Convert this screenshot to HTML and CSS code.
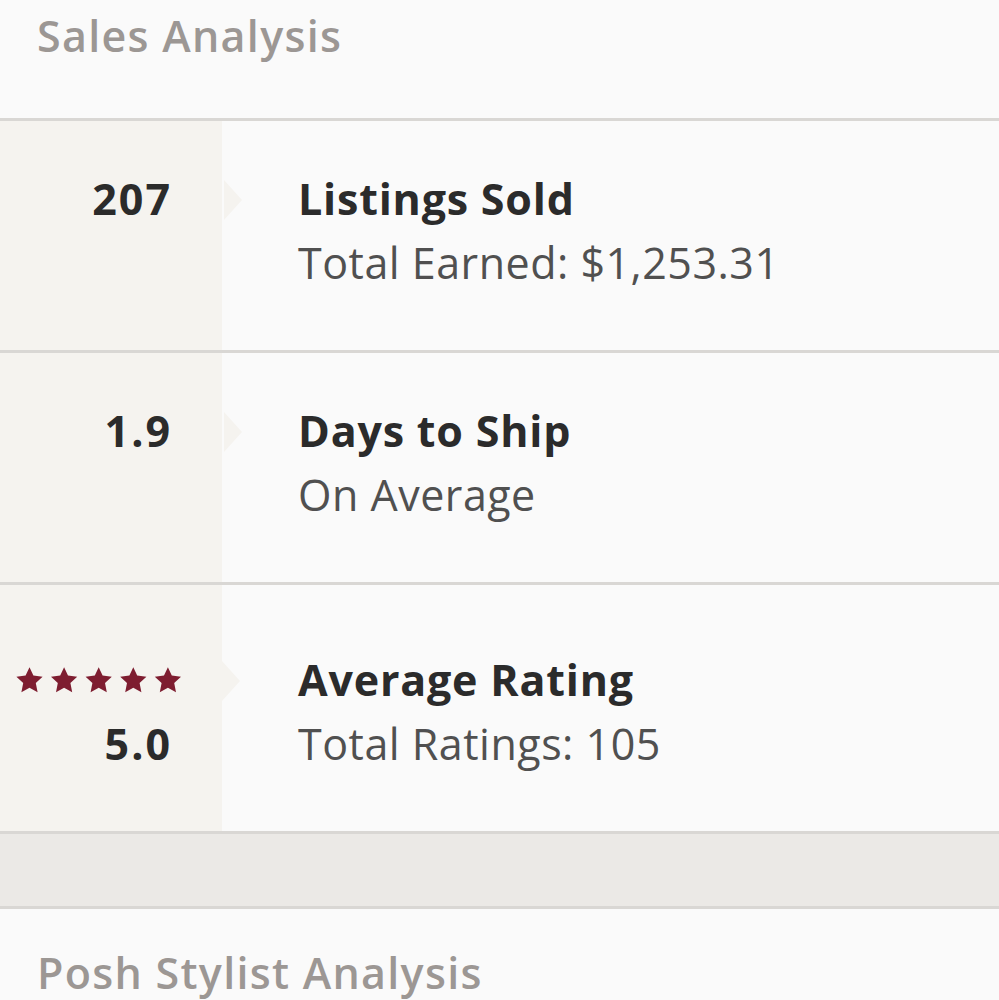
FILE: index.html
```html
<!DOCTYPE html>
<html lang="en">
<head>
  <meta charset="UTF-8">
  <title>Sales Analysis</title>
  <link rel="stylesheet" href="styles.css">
</head>
<body>

<!-- SALES ANALYSIS -->
<div class="section-head">
  <h2>Sales Analysis</h2>
</div>

<div class="stat-list">
  <div class="stat">
    <div class="stat-left">
      <div class="stat-top num">207</div>
    </div>
    <div class="stat-right">
      <div class="title">Listings Sold</div>
      <div class="sub">Total Earned: $1,253.31</div>
    </div>
  </div>

  <div class="stat">
    <div class="stat-left">
      <div class="stat-top num">1.9</div>
    </div>
    <div class="stat-right">
      <div class="title">Days to Ship</div>
      <div class="sub">On Average</div>
    </div>
  </div>

  <div class="stat stat-rating">
    <div class="stat-left">
      <div class="stat-top stars">
        <svg width="166" height="27" viewBox="0 0 166 27">
          <defs>
            <polygon id="star" points="13.5,0.2 17.4,8.6 26.6,9.7 19.8,16.1 21.6,25.2 13.5,20.7 5.4,25.2 7.2,16.1 0.4,9.7 9.6,8.6"/>
          </defs>
          <g fill="#7e1d30">
            <use href="#star"/>
            <use href="#star" x="34.6"/>
            <use href="#star" x="69.2"/>
            <use href="#star" x="103.8"/>
            <use href="#star" x="138.4"/>
          </g>
        </svg>
      </div>
      <div class="num">5.0</div>
    </div>
    <div class="stat-right">
      <div class="title">Average Rating</div>
      <div class="sub">Total Ratings: 105</div>
    </div>
  </div>
</div>

<div class="band"></div>

<!-- POSH STYLIST -->
<div class="section-head section-head-next">
  <h2>Posh Stylist Analysis</h2>
</div>

</body>
</html>
```

FILE: styles.css
```css
body {
  margin: 0;
  background: #fafafa;
  font-family: "Open Sans", Lato, sans-serif;
  font-size: 43px;
  line-height: 64px;
  color: #2b2b2b;
}
h2 {
  margin: 0;
  font-size: 43px;
  font-weight: 600;
  letter-spacing: 1.3px;
  color: #9c9794;
}
.section-head {
  height: 114px;
  padding: 4px 0 0 37px;
  border-bottom: 3px solid #d9d7d4;
}
.section-head-next { height: 80px; padding-top: 32px; border-bottom: none; }

.stat {
  display: flex;
  border-bottom: 3px solid #d9d7d4;
}
.stat-left {
  width: 222px;
  box-sizing: border-box;
  padding: 46px 52px 0 0;
  background: #f5f3ef;
  text-align: right;
}
.stat-right {
  flex: 1;
  padding: 46px 0 55px 76px;
}
.stat-rating .stat-left,
.stat-rating .stat-right { padding-top: 63px; }

.stat-top { position: relative; }
.stat-top::after {
  content: "";
  position: absolute;
  right: -70px;
  top: 13px;
  border-left: 18px solid #f5f3ef;
  border-top: 20px solid transparent;
  border-bottom: 20px solid transparent;
}
.num { font-weight: 700; letter-spacing: 2px; margin-right: -2px; }
.stars { height: 64px; display: flex; align-items: center; justify-content: flex-end; margin-right: -12px; }
.stars::after { right: -58px; }
.stars svg { display: block; }

.title { font-weight: 700; letter-spacing: 0.8px; }
.sub { color: #505050; letter-spacing: 0.5px; }

.band {
  height: 72px;
  background: #ebe9e6;
  border-bottom: 3px solid #d9d7d4;
}
```
